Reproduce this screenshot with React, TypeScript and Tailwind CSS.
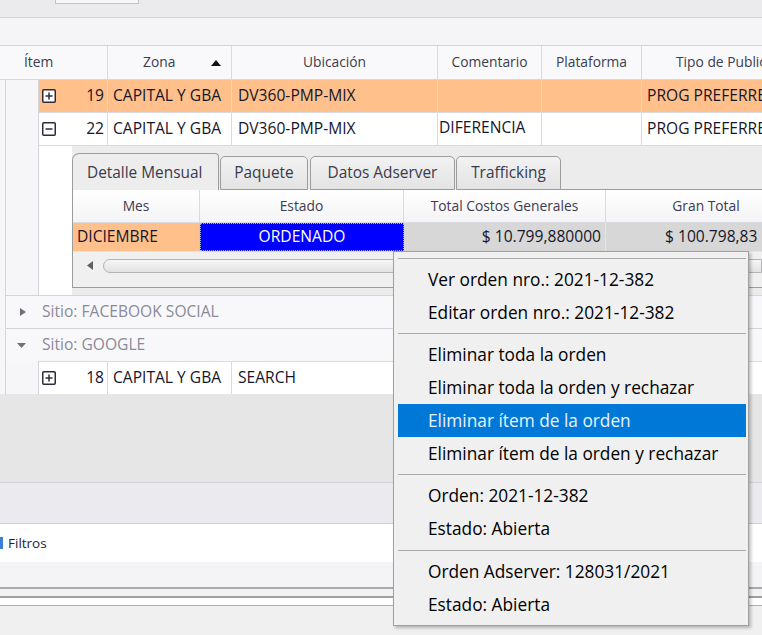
import React from "react";

function Expander({ minus }: { minus?: boolean }) {
  return (
    <svg width="14" height="14" viewBox="0 0 14 14" className="shrink-0">
      <rect x="0.75" y="0.75" width="12.5" height="12.5" rx="1" fill="#ffffff" stroke="#2b2b3b" strokeWidth="1.5" />
      <line x1="3.5" y1="7" x2="10.5" y2="7" stroke="#2b2b3b" strokeWidth="1.5" />
      {!minus && <line x1="7" y1="3.5" x2="7" y2="10.5" stroke="#2b2b3b" strokeWidth="1.5" />}
    </svg>
  );
}

function Indent() {
  return (
    <div className="flex shrink-0 self-stretch">
      <div className="w-[6px] bg-[#f6f6f8] border-r border-[#d4d5db]" />
      <div className="w-[33px] bg-[#f6f6f8] border-r border-[#d4d5db]" />
    </div>
  );
}

function DataRow({
  num,
  zona,
  ubic,
  coment,
  tipo,
  orange,
  minus,
  h,
}: {
  num: string;
  zona: string;
  ubic: string;
  coment?: string;
  tipo?: string;
  orange?: boolean;
  minus?: boolean;
  h: string;
}) {
  const bg = orange ? "bg-[#ffc08b]" : "bg-white";
  const cell = "border-r border-[#dadbe0] overflow-hidden whitespace-nowrap";
  return (
    <div className={`flex ${h}`}>
      <Indent />
      <div className={`flex flex-1 border-b border-[#dadbe0] ${bg} text-[15.6px] text-[#16162a]`}>
        <div className={`${cell} w-[69px] flex items-center pl-[3px] pr-[3px]`}>
          <Expander minus={minus} />
          <span className="ml-auto">{num}</span>
        </div>
        <div className={`${cell} w-[124px] flex items-center pl-[5px]`}>{zona}</div>
        <div className={`${cell} w-[206px] flex items-center pl-[6px]`}>{ubic}</div>
        <div className={`${cell} w-[104px] pl-[1px] pt-[3px]`}>{coment}</div>
        <div className={`${cell} w-[100px]`} />
        <div className="flex-1 flex items-center pl-[5px] overflow-hidden whitespace-nowrap">{tipo}</div>
      </div>
    </div>
  );
}

function MenuItem({ children, active }: { children: React.ReactNode; active?: boolean }) {
  return (
    <div
      className={`h-[33px] flex items-center pl-[30px] text-[17.3px] whitespace-nowrap ${
        active ? "bg-[#0078d7] text-[#eaf3fb]" : "text-[#000000]"
      }`}
    >
      {children}
    </div>
  );
}

function Sep({ h = "h-[9px]" }: { h?: string }) {
  return (
    <div className={`${h} flex items-center`}>
      <div className="w-full h-[1px] bg-[#a9a9ad]" />
    </div>
  );
}

export default function App() {
  const hcell = "border-r border-[#dadbe0] flex items-center justify-center whitespace-nowrap overflow-hidden";
  return (
    <div className="relative w-[762px] h-[635px] overflow-hidden bg-[#f0f0f0] font-['Open_Sans',sans-serif]">
      {/* top toolbar strip */}
      <div className="h-[18px] bg-[#ebebee] border-b border-[#d2d3d8]">
        <div className="ml-[55px] w-[84px] h-[4px] bg-[#f6f6f8] border-x border-b border-[#c3c3c8]" />
      </div>
      <div className="h-[28px] bg-[#f5f5f7] border-b border-[#d3d4d9]" />

      {/* header */}
      <div className="flex h-[34px] bg-[#f9f9fb] border-b border-[#d6d7dd] text-[13.8px] text-[#3c3c4e]">
        <div className="w-[108px] border-r border-[#dadbe0] flex items-center pl-[24px]">Ítem</div>
        <div className="w-[124px] border-r border-[#dadbe0] flex items-center relative">
          <span className="ml-[35px]">Zona</span>
          <svg width="10" height="6" viewBox="0 0 10 6" className="absolute right-[10px] top-[14px]">
            <polygon points="5,0 10,6 0,6" fill="#111" />
          </svg>
        </div>
        <div className={`${hcell} w-[206px]`}>Ubicación</div>
        <div className={`${hcell} w-[104px]`}>Comentario</div>
        <div className={`${hcell} w-[100px]`}>Plataforma</div>
        <div className="flex-1 flex items-center pl-[34px] whitespace-nowrap overflow-hidden">Tipo de Publicación</div>
      </div>

      <DataRow h="h-[33px]" num="19" zona="CAPITAL Y GBA" ubic="DV360-PMP-MIX" tipo="PROG PREFERRED" orange />
      <DataRow h="h-[33px]" num="22" zona="CAPITAL Y GBA" ubic="DV360-PMP-MIX" coment="DIFERENCIA" tipo="PROG PREFERRED" minus />

      {/* detail area */}
      <div className="flex h-[149px]">
        <Indent />
        <div className="w-[33px] bg-white shrink-0" />
        <div className="flex-1 bg-[#ececec] pt-[7px] flex flex-col min-w-0">
          {/* tab strip */}
          <div className="flex items-end h-[37px] text-[15.4px] text-[#3a3a4e]">
            <div className="h-[37px] w-[147px] bg-[#ededed] border-l border-t border-r border-[#9c9c9c] rounded-tl-[7px] rounded-tr-[4px] flex items-center pl-[14px] pt-[1px] whitespace-nowrap">
              Detalle Mensual
            </div>
            <div className="h-[34px] w-[88px] ml-[1px] bg-gradient-to-b from-[#f2f2f2] to-[#e3e3e3] border border-[#9c9c9c] rounded-t-[5px] flex items-center justify-center">
              Paquete
            </div>
            <div className="h-[34px] w-[145px] ml-[2px] bg-gradient-to-b from-[#f2f2f2] to-[#e3e3e3] border border-[#9c9c9c] rounded-t-[5px] flex items-center justify-center whitespace-nowrap">
              Datos Adserver
            </div>
            <div className="h-[34px] w-[105px] ml-[1px] bg-gradient-to-b from-[#f2f2f2] to-[#e3e3e3] border border-[#9c9c9c] rounded-t-[5px] flex items-center justify-center">
              Trafficking
            </div>
            <div className="flex-1 border-b border-[#9c9c9c]" />
          </div>
          {/* tab content */}
          <div className="h-[98px] border-l border-b border-[#9c9c9c] bg-[#efefef] flex flex-col">
            <div className="flex h-[33px] bg-gradient-to-b from-[#ffffff] to-[#f4f4f6] border-b border-[#dadbe0] text-[13.8px] text-[#3c3c4e]">
              <div className={`${hcell} w-[127px] shrink-0`}>Mes</div>
              <div className={`${hcell} w-[204px] shrink-0`}>Estado</div>
              <div className={`${hcell} w-[202px] shrink-0`}>Total Costos Generales</div>
              <div className="w-[200px] shrink-0 flex items-center justify-center whitespace-nowrap">Gran Total</div>
            </div>
            <div className="flex h-[29px] text-[15.6px] text-[#16162a] border-b border-[#e2e2e6]">
              <div className="w-[127px] shrink-0 bg-[#ffc08b] border-r border-[#e0c0a0] flex items-center pl-[4px]">DICIEMBRE</div>
              <div className="w-[204px] shrink-0 bg-[#0000ff] border border-dotted border-[#9fb6ff] flex items-center justify-center text-white">
                ORDENADO
              </div>
              <div className="w-[202px] shrink-0 bg-[#d7d7d7] border-r border-[#e6e6e6] flex items-center justify-end pr-[4px]">
                $ 10.799,880000
              </div>
              <div className="w-[200px] shrink-0 bg-[#d7d7d7] flex items-center pl-[59px] whitespace-nowrap overflow-hidden">
                $ 100.798,83
              </div>
            </div>
            <div className="h-[27px] flex items-center bg-[#f0f0f0]">
              <svg width="6" height="9" viewBox="0 0 6 9" className="ml-[14px]">
                <polygon points="6,0 6,9 0,4.5" fill="#606060" />
              </svg>
              <div className="ml-[10px] flex-1 h-[14px] rounded-l-full border border-[#b4b4b8] bg-gradient-to-b from-[#f6f6f6] to-[#e2e2e2]" />
            </div>
            <div className="flex-1 bg-[#f0f0f0]" />
          </div>
        </div>
      </div>

      {/* groups */}
      <div className="flex h-[33px]">
        <div className="w-[6px] bg-[#f6f6f8] border-r border-[#d4d5db] shrink-0" />
        <div className="flex-1 bg-[#f8f8fa] border-t border-[#d4d5db] flex items-center text-[15.6px] text-[#8a8a98]">
          <svg width="6" height="8" viewBox="0 0 6 8" className="ml-[14px]">
            <polygon points="0,0 6,4 0,8" fill="#707078" />
          </svg>
          <span className="ml-[16px]">Sitio: FACEBOOK SOCIAL</span>
        </div>
      </div>
      <div className="flex h-[33px]">
        <div className="w-[6px] bg-[#f6f6f8] border-r border-[#d4d5db] shrink-0" />
        <div className="flex-1 bg-[#f8f8fa] border-t border-[#d4d5db] flex items-center text-[15.6px] text-[#8a8a98]">
          <svg width="9" height="5" viewBox="0 0 9 5" className="ml-[11px] mt-[1px]">
            <polygon points="0,0 9,0 4.5,5" fill="#707078" />
          </svg>
          <span className="ml-[16px]">Sitio: GOOGLE</span>
        </div>
      </div>
      <div className="flex h-[33px]">
        <Indent />
        <div className="flex flex-1 border-t border-[#dadbe0] bg-white text-[15.6px] text-[#16162a]">
          <div className="border-r border-[#dadbe0] w-[69px] flex items-center pl-[3px] pr-[3px]">
            <Expander />
            <span className="ml-auto">18</span>
          </div>
          <div className="border-r border-[#dadbe0] w-[124px] flex items-center pl-[5px] whitespace-nowrap overflow-hidden">CAPITAL Y GBA</div>
          <div className="border-r border-[#dadbe0] w-[206px] flex items-center pl-[6px]">SEARCH</div>
          <div className="flex-1" />
        </div>
      </div>

      {/* lower panels */}
      <div className="h-[89px] bg-[#e6e6e6] border-b border-[#d2d2d6]" />
      <div className="h-[41px] bg-[#ebebef] border-b border-[#d0d0d4]" />
      <div className="h-[38px] bg-white flex items-center text-[13.5px] text-[#1e1e30]">
        <div className="w-[3px] h-[12px] bg-[#3b7fd0]" />
        <span className="ml-[5px]">Filtros</span>
      </div>
      <div className="h-[27px] bg-[#f4f4f6] border-b-2 border-[#a9a9ad]" />
      <div className="h-[9px] bg-[#f3f3f3] border-b-2 border-[#a0a0a4]" />
      <div className="h-[8px] bg-white border-b border-[#b0b0b4]" />

      {/* context menu */}
      <div className="absolute left-[393px] top-[251px] w-[356px] h-[375px] bg-[#f0f0f0] border border-[#a0a0a0] shadow-[2px_2px_3px_rgba(0,0,0,0.25)] pl-[4px] pr-[2px] pt-[2px]">
        <Sep />
        <MenuItem>Ver orden nro.: 2021-12-382</MenuItem>
        <MenuItem>Editar orden nro.: 2021-12-382</MenuItem>
        <Sep />
        <MenuItem>Eliminar toda la orden</MenuItem>
        <MenuItem>Eliminar toda la orden y rechazar</MenuItem>
        <MenuItem active>Eliminar ítem de la orden</MenuItem>
        <MenuItem>Eliminar ítem de la orden y rechazar</MenuItem>
        <Sep />
        <MenuItem>Orden: 2021-12-382</MenuItem>
        <MenuItem>Estado: Abierta</MenuItem>
        <Sep h="h-[10px]" />
        <MenuItem>Orden Adserver: 128031/2021</MenuItem>
        <MenuItem>Estado: Abierta</MenuItem>
      </div>
    </div>
  );
}
